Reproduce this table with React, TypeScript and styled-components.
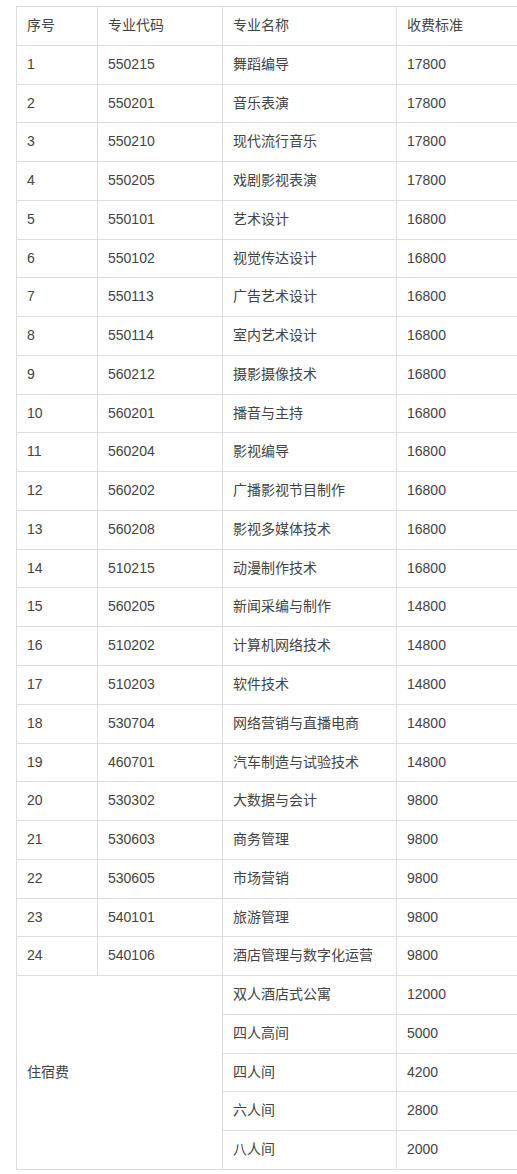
import React from "react";
import styled, { createGlobalStyle } from "styled-components";

const GlobalStyle = createGlobalStyle`
  html, body {
    margin: 0;
    padding: 0;
    background: #fff;
    overflow: hidden;
  }
`;

const Page = styled.div`
  width: 517px;
  overflow: hidden;
  padding: 6px 0 0 16px;
  box-sizing: border-box;
`;

const Table = styled.table`
  border-collapse: collapse;
  width: 560px;
  table-layout: fixed;
  font-family: "Liberation Sans", Arial, "Noto Sans CJK SC", sans-serif;
  font-size: 14px;
  color: #444;
`;

const Cell = styled.td`
  border: 1px solid #ddd;
  padding: 8px 10px;
  line-height: 21.77px;
  text-align: left;
  vertical-align: middle;
  white-space: nowrap;
  font-weight: normal;
`;

const majors: [string, string, string][] = [
  ["550215", "舞蹈编导", "17800"],
  ["550201", "音乐表演", "17800"],
  ["550210", "现代流行音乐", "17800"],
  ["550205", "戏剧影视表演", "17800"],
  ["550101", "艺术设计", "16800"],
  ["550102", "视觉传达设计", "16800"],
  ["550113", "广告艺术设计", "16800"],
  ["550114", "室内艺术设计", "16800"],
  ["560212", "摄影摄像技术", "16800"],
  ["560201", "播音与主持", "16800"],
  ["560204", "影视编导", "16800"],
  ["560202", "广播影视节目制作", "16800"],
  ["560208", "影视多媒体技术", "16800"],
  ["510215", "动漫制作技术", "16800"],
  ["560205", "新闻采编与制作", "14800"],
  ["510202", "计算机网络技术", "14800"],
  ["510203", "软件技术", "14800"],
  ["530704", "网络营销与直播电商", "14800"],
  ["460701", "汽车制造与试验技术", "14800"],
  ["530302", "大数据与会计", "9800"],
  ["530603", "商务管理", "9800"],
  ["530605", "市场营销", "9800"],
  ["540101", "旅游管理", "9800"],
  ["540106", "酒店管理与数字化运营", "9800"],
];

const dorms: [string, string][] = [
  ["双人酒店式公寓", "12000"],
  ["四人高间", "5000"],
  ["四人间", "4200"],
  ["六人间", "2800"],
  ["八人间", "2000"],
];

export default function App() {
  return (
    <>
      <GlobalStyle />
      <Page>
        <Table>
          <colgroup>
            <col style={{ width: 81 }} />
            <col style={{ width: 125 }} />
            <col style={{ width: 174 }} />
            <col style={{ width: 180 }} />
          </colgroup>
          <tbody>
            <tr>
              <Cell>序号</Cell>
              <Cell>专业代码</Cell>
              <Cell>专业名称</Cell>
              <Cell>收费标准</Cell>
            </tr>
            {majors.map(([code, name, fee], i) => (
              <tr key={code + i}>
                <Cell>{i + 1}</Cell>
                <Cell>{code}</Cell>
                <Cell>{name}</Cell>
                <Cell>{fee}</Cell>
              </tr>
            ))}
            {dorms.map(([name, fee], i) => (
              <tr key={name}>
                {i === 0 && (
                  <Cell rowSpan={dorms.length} colSpan={2}>
                    住宿费
                  </Cell>
                )}
                <Cell>{name}</Cell>
                <Cell>{fee}</Cell>
              </tr>
            ))}
          </tbody>
        </Table>
      </Page>
    </>
  );
}
